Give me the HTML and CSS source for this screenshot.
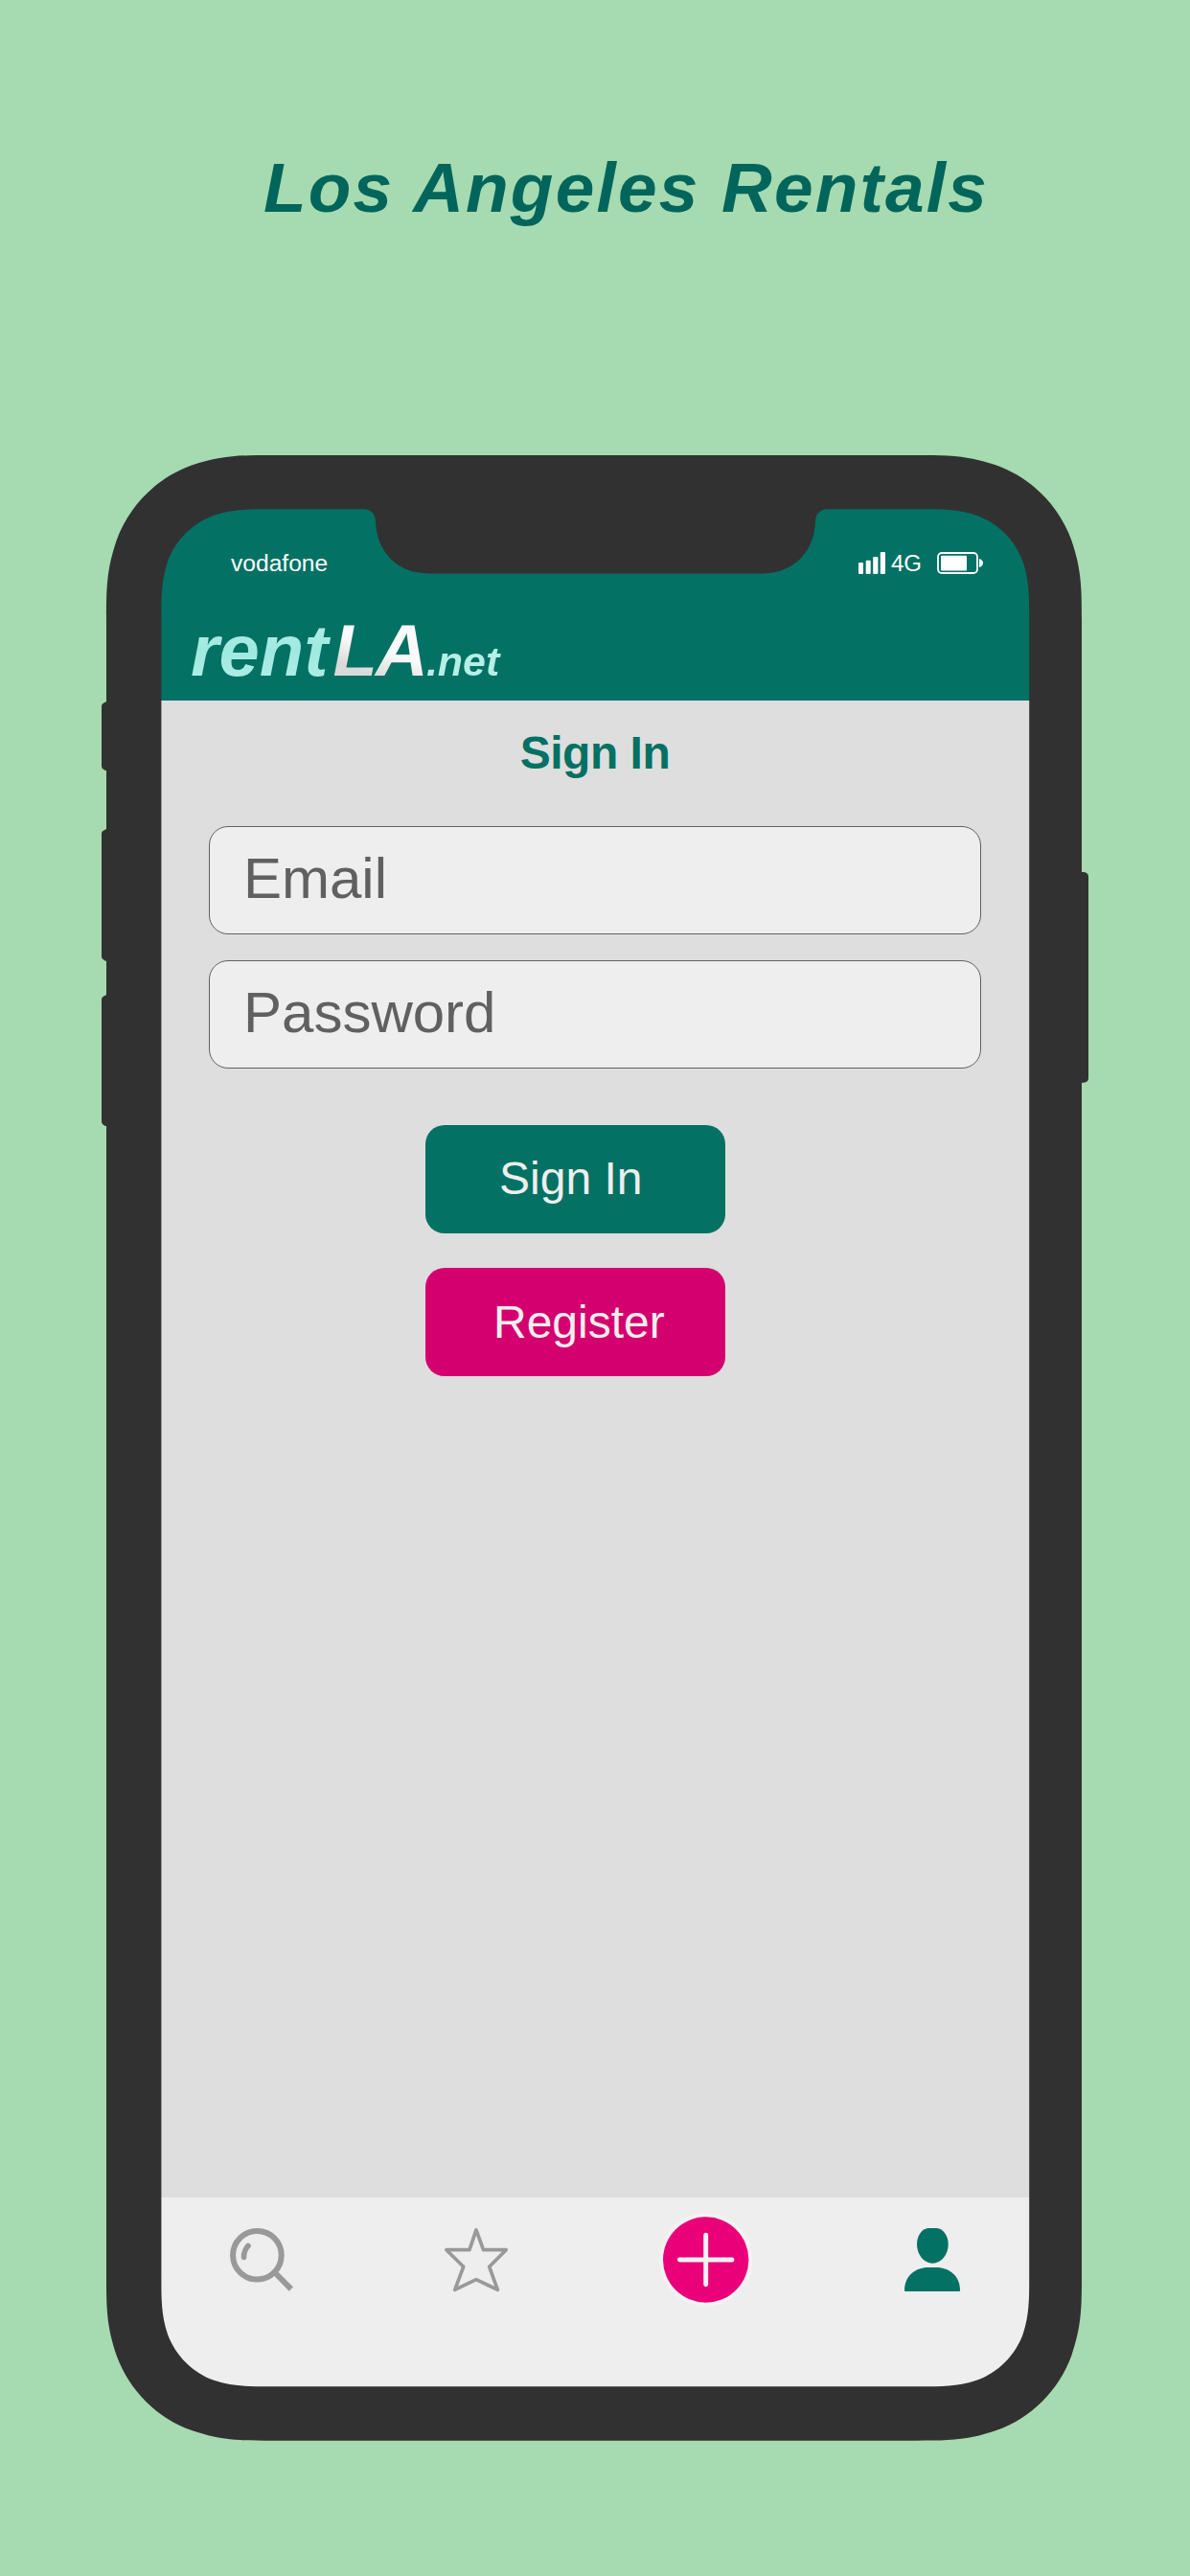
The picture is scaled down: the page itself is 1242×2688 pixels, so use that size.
FILE: index.html
```html
<!DOCTYPE html>
<html lang="en">
<head>
<meta charset="utf-8">
<title>Los Angeles Rentals</title>
<link rel="stylesheet" href="styles.css">
</head>
<body>
<h1 class="headline">Los Angeles Rentals</h1>
<main class="phone">
  <div class="screen">
    <header class="header">
      <div class="status">
        <span class="carrier">vodafone</span>
        <svg class="signal" width="28" height="23" viewBox="0 0 28 23" fill="#fff">
          <rect x="0" y="11" width="5" height="12" rx="1"/><rect x="7.7" y="8.7" width="5" height="14.3" rx="1"/><rect x="15.2" y="5" width="5.2" height="18" rx="1"/><rect x="22.8" y="0" width="5.2" height="23" rx="1"/>
        </svg>
        <span class="network">4G</span>
        <svg class="battery" width="49" height="23" viewBox="0 0 49 23">
          <rect x="1" y="1" width="41" height="21" rx="4" fill="none" stroke="#fff" stroke-width="1.8"/>
          <rect x="4" y="3.8" width="27" height="15.6" rx="1" fill="#fff"/>
          <path d="M44 7 Q48 8.500 48 11.500 Q48 14.500 44 16Z" fill="#fff"/>
        </svg>
      </div>
      <div class="logo"><span class="logo-rent">rent</span><span class="logo-la">LA</span><span class="logo-net">.net</span></div>
    </header>
    <form class="form">
      <h2 class="form-title">Sign In</h2>
      <input class="field" type="text" placeholder="Email" aria-label="Email">
      <input class="field" type="password" placeholder="Password" aria-label="Password">
      <button class="button button-signin" type="button">Sign In</button>
      <button class="button button-register" type="button">Register</button>
    </form>
    <nav class="tabs">
      <svg width="66" height="98" viewBox="240 2309 66 98" fill="none" stroke="#999" stroke-width="6">
        <circle cx="268.400" cy="2353.300" r="25.300"/>
        <path d="M288 2372.500 L303.800 2388.700" />
        <path d="M254.500 2355.500 Q254.300 2348.500 259 2343.500" stroke-linecap="round" stroke-width="5.600"/>
      </svg>
      <svg width="66" height="98" viewBox="464 2309 66 98" fill="none" stroke="#999" stroke-width="3.700" stroke-linejoin="round">
        <path d="M497 2326.900 L504.500 2347.700 H528.200 L510.700 2365.300 L519.400 2389.300 L497 2378.700 L474.700 2389.300 L483.700 2365.300 L465.900 2347.700 H490Z"/>
      </svg>
      <svg width="98" height="98" viewBox="688 2309 98 98">
        <circle cx="736.700" cy="2358" r="48.600" fill="#f3f3f3"/>
        <circle cx="736.700" cy="2358" r="44.700" fill="#ea0079"/>
        <path d="M736.700 2332.300 V2383.700 M709.400 2358 H764" fill="none" stroke="#f2f2f2" stroke-width="4.900" stroke-linecap="round"/>
      </svg>
      <svg width="58" height="98" viewBox="944 2309 58 98" fill="#037163">
        <path d="M970 2325 H976.500 C984 2325 989.700 2332.500 989.700 2342 C989.700 2352.500 982.500 2361.700 973.300 2361.700 C964.100 2361.700 957 2352.500 957 2342 C957 2332.500 962.500 2325 970 2325Z"/>
        <path d="M944 2390 C944 2375 955 2366 969 2366 H977 C991 2366 1002 2375 1002 2390 Q1002 2391 1001 2391 H945 Q944 2391 944 2390Z"/>
      </svg>
    </nav>
  </div>
  <!-- bezel, notch and side keys, laid over the screen -->
  <svg class="bezel" width="1032" height="2072" viewBox="105 475 1032 2072" fill="#313131">
    <path fill-rule="evenodd" d="M283 475 H957 C989 475 1009 475 1040 485.600 C1076.500 498.800 1105.200 527.500 1118.400 564 C1129 595 1129 615 1129 647
      V2374.700 C1129 2406.700 1129 2426.700 1118.400 2457.700 C1105.200 2494.200 1076.500 2522.900 1040 2536.100 C1009 2546.700 989 2546.700 957 2546.700
      H283 C251 2546.700 231 2546.700 200 2536.100 C163.500 2522.900 134.800 2494.200 121.600 2457.700 C111 2426.700 111 2406.700 111 2374.700
      V647 C111 615 111 595 121.600 564 C134.800 527.500 163.500 498.800 200 485.600 C231 475 251 475 283 475Z
      M280.400 531.300 C260.400 531.300 242.400 531.300 223.300 537.800 C200.800 546 183.100 563.700 174.900 586.200 C168.400 605.300 168.400 623.300 168.400 643.300
      V2378.300 C168.400 2398.300 168.400 2416.300 174.900 2435.400 C183.100 2457.900 200.800 2475.600 223.300 2483.800 C242.400 2490.300 260.400 2490.300 280.400 2490.300
      H962.200 C982.200 2490.300 1000.200 2490.300 1019.300 2483.800 C1041.800 2475.600 1059.500 2457.900 1067.700 2435.400 C1074.200 2416.300 1074.200 2398.300 1074.200 2378.300
      V643.300 C1074.200 623.300 1074.200 605.300 1067.700 586.200 C1059.500 563.700 1041.800 546 1019.300 537.800 C1000.200 531.300 982.200 531.300 962.200 531.300
      H863 C856 531.300 851 537 851 544 C850 574 830 598.400 796 598.400 H447 C413 598.400 393 574 392 544 C392 537 387 531.300 380 531.300Z"/>
    <path d="M112 731.500 L107.500 734 Q106 735 106 737 V799 Q106 801 107.500 802.500 L110 804 H112Z M112 864.500 L107.500 867 Q106 868 106 870 V998 Q106 1000 107.500 1001 L110 1002.700 H112Z M112 1037.500 L107.500 1040 Q106 1041 106 1043 V1170 Q106 1172 107.500 1173.500 L110 1175 H112Z M1128 910 H1131 Q1136 910.500 1136 915 V1125 Q1136 1129.300 1131 1129.800 H1128Z"/>
  </svg>
</main>
</body>
</html>
```
FILE: styles.css
```css
* {
  box-sizing: border-box;
}

body {
  margin: 0;
  min-height: 2688px;
  background: #a6dab0;
  font-family: "Liberation Sans", Arial, sans-serif;
}

.headline {
  margin: 0;
  padding: 156px 0 0 275px;
  height: 475px;
  font-size: 73px;
  font-style: italic;
  line-height: 80px;
  letter-spacing: 2.2px;
  color: #00655b;
}

.phone {
  position: relative;
  width: 1018px;
  height: 2072px;
  margin-left: 111px;
  padding: 56px 54px 56px 57px;
}

.bezel {
  position: absolute;
  top: 0;
  left: -6px;
  pointer-events: none;
}

.screen {
  display: flex;
  flex-direction: column;
  height: 1960px;
  background: #dedede;
}

.header {
  height: 200px;
  padding-top: 45px;
  background: #037163;
}

.status {
  display: flex;
  height: 23px;
  padding: 0 48px 0 73px;
  font-size: 24.600px;
  line-height: 23px;
  color: #fff;
}

.carrier {
  margin-right: auto;
}

.network {
  margin: 0 16px 0 6px;
  font-size: 24px;
}

.logo {
  display: flex;
  align-items: baseline;
  margin-top: 40px;
  padding-left: 31px;
  font-size: 76px;
  font-style: italic;
  font-weight: bold;
  line-height: 80px;
}

.logo span {
  padding-right: 10px;
  background-clip: text;
  -webkit-background-clip: text;
  color: transparent;
}

.logo-rent {
  background-image: linear-gradient(#b4efe8, #9fe9e1 50%, #b4efe8);
}

.logo-la {
  margin-left: -5px;
  letter-spacing: -2px;
  background-image: linear-gradient(20deg, #dadada 25%, #fafafa 50%);
}

.logo-net {
  margin-left: -10px;
  font-size: 43px;
  background-image: linear-gradient(#b4efe8, #b4efe8);
}

.form {
  display: flex;
  flex: 1;
  flex-direction: column;
  padding: 27px 51px 0 50px;
}

.form-title {
  margin: 0 0 48px;
  font-size: 48px;
  line-height: 56px;
  letter-spacing: -0.5px;
  text-align: center;
  color: #037163;
}

.field {
  height: 113px;
  margin: 0 0 27px;
  padding: 0 35px 4px;
  border: 1px solid #606060;
  border-radius: 20px;
  background: #eee;
  font: 60px "Liberation Sans", Arial, sans-serif;
  color: #606060;
}

.field::placeholder {
  color: #606060;
  opacity: 1;
}

.button {
  width: 313px;
  height: 113px;
  margin: 0 0 36px 226px;
  border: 0;
  border-radius: 20px;
  font: 48px "Liberation Sans", Arial, sans-serif;
  text-align: left;
  color: #eee;
}

.button-signin {
  margin-top: 32px;
  padding: 0 0 2px 77px;
  background: #037163;
}

.button-register {
  padding: 0 0 0 71px;
  background: #d5006f;
}

.tabs {
  display: flex;
  justify-content: space-between;
  height: 198px;
  padding: 16px 73px 0 72px;
  background: #eee;
}
```
